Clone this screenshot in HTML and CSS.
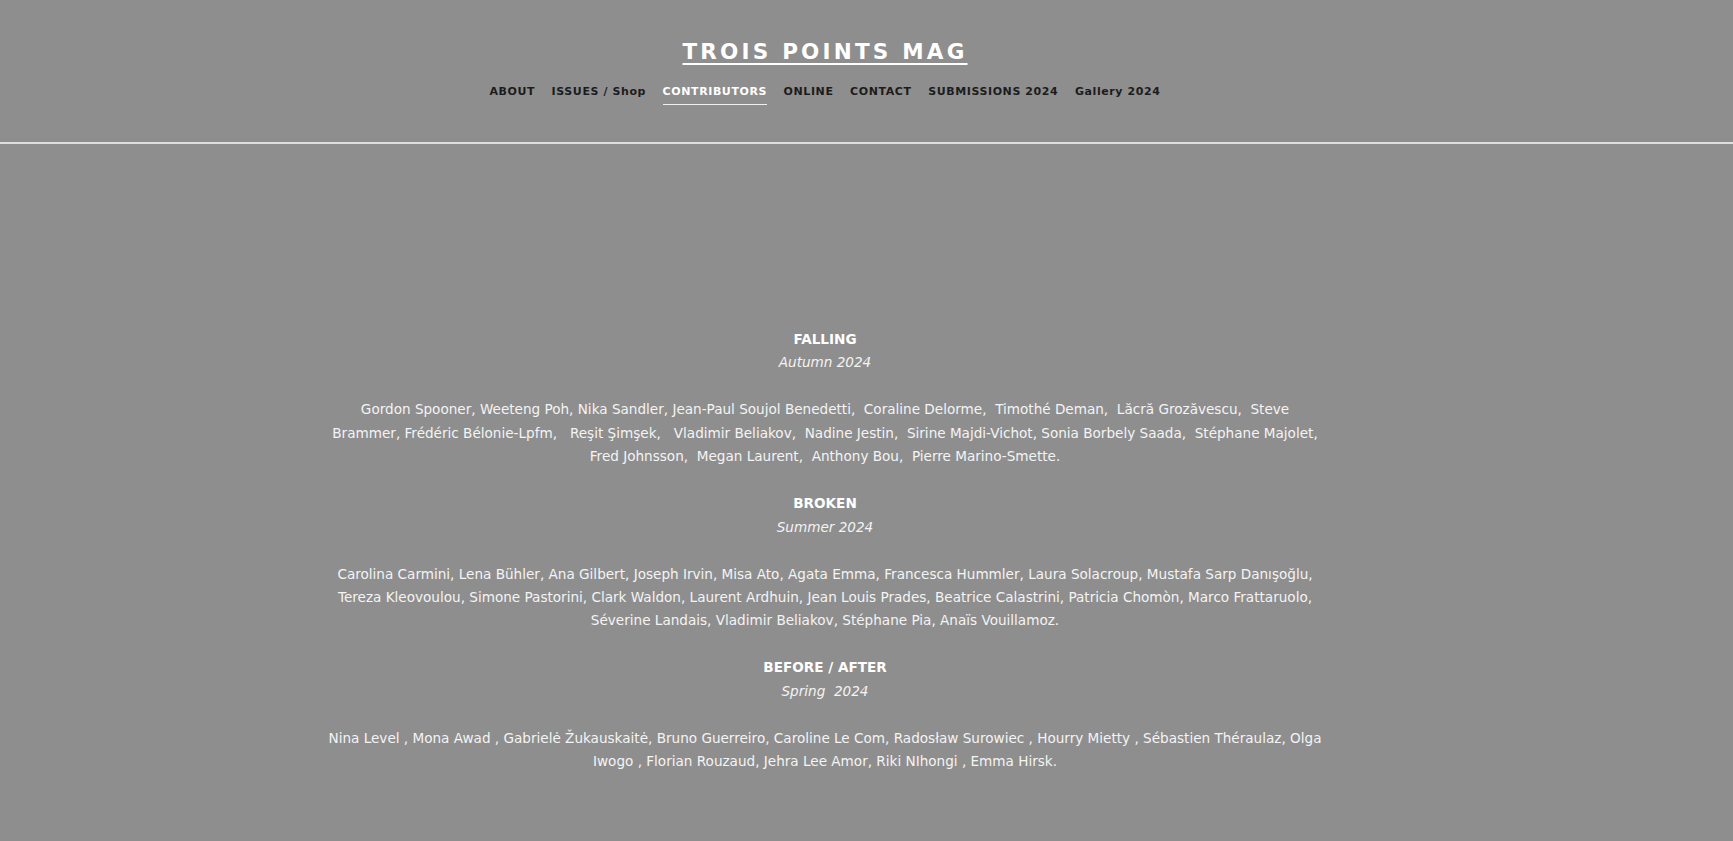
FILE: index.html
```html
<!DOCTYPE html>
<html lang="fr">
<head>
<meta charset="utf-8">
<title>Contributors — Trois Points Mag</title>
<link rel="stylesheet" href="styles.css">
</head>
<body>
<header class="site-header">
  <div class="header-inner">
    <a class="brand" href="#">TROIS POINTS MAG</a>
    <nav class="main-nav">
      <a class="nav-link" href="#">ABOUT</a>
      <a class="nav-link" href="#">ISSUES / Shop</a>
      <a class="nav-link active" href="#">CONTRIBUTORS</a>
      <a class="nav-link" href="#">ONLINE</a>
      <a class="nav-link" href="#">CONTACT</a>
      <a class="nav-link" href="#">SUBMISSIONS 2024</a>
      <a class="nav-link" href="#">Gallery 2024</a>
    </nav>
  </div>
</header>
<main class="content">
  <div class="text-block">
    <p class="issue-title">FALLING</p>
    <p class="issue-season">Autumn 2024</p>
    <p class="spacer">&nbsp;</p>
    <p class="names">Gordon Spooner, Weeteng Poh, Nika Sandler, Jean-Paul Soujol Benedetti,&nbsp; Coraline Delorme,&nbsp; Timothé Deman,&nbsp; Lăcră Grozăvescu,&nbsp; Steve Brammer, Frédéric Bélonie-Lpfm,&nbsp;&nbsp; Reşit Şimşek,&nbsp;&nbsp; Vladimir Beliakov,&nbsp; Nadine Jestin,&nbsp; Sirine Majdi-Vichot, Sonia Borbely Saada,&nbsp; Stéphane Majolet, Fred Johnsson,&nbsp; Megan Laurent,&nbsp; Anthony Bou,&nbsp; Pierre Marino-Smette.</p>
    <p class="spacer">&nbsp;</p>
    <p class="issue-title">BROKEN</p>
    <p class="issue-season">Summer 2024</p>
    <p class="spacer">&nbsp;</p>
    <p class="names">Carolina Carmini, Lena Bühler, Ana Gilbert, Joseph Irvin, Misa Ato, Agata Emma, Francesca Hummler, Laura Solacroup, Mustafa Sarp Danışoğlu, Tereza Kleovoulou, Simone Pastorini, Clark Waldon, Laurent Ardhuin, Jean Louis Prades, Beatrice Calastrini, Patricia Chomòn, Marco Frattaruolo, Séverine Landais, Vladimir Beliakov, Stéphane Pia, Anaïs Vouillamoz.</p>
    <p class="spacer">&nbsp;</p>
    <p class="issue-title">BEFORE / AFTER</p>
    <p class="issue-season">Spring&nbsp; 2024</p>
    <p class="spacer">&nbsp;</p>
    <p class="names">Nina Level , Mona Awad , Gabrielė Žukauskaitė, Bruno Guerreiro, Caroline Le Com, Radosław Surowiec , Hourry Mietty , Sébastien Théraulaz, Olga Iwogo , Florian Rouzaud, Jehra Lee Amor, Riki NIhongi , Emma Hirsk.</p>
  </div>
</main>
</body>
</html>
```
FILE: styles.css
```css
html, body {
  margin: 0;
  padding: 0;
}
body {
  background: #8e8e8e;
  font-family: "DejaVu Sans", "Liberation Sans", sans-serif;
  color: #f4f4f4;
}
.site-header {
  border-bottom: 2px solid #dedede;
}
.header-inner {
  width: 1650px;
  display: flex;
  flex-direction: column;
  align-items: center;
  padding: 37px 0 37px;
}
.brand {
  font-size: 21.5px;
  line-height: 30px;
  font-weight: 700;
  letter-spacing: 3.2px;
  color: #ffffff;
  text-decoration: underline;
  text-decoration-thickness: 2px;
  text-underline-offset: 4px;
}
.main-nav {
  display: flex;
  gap: 16.5px;
  margin-top: 15px;
}
.nav-link {
  font-size: 11px;
  line-height: 20px;
  font-weight: 700;
  letter-spacing: 0.6px;
  color: #1c1c1c;
  text-decoration: none;
  padding-bottom: 2px;
  border-bottom: 1px solid transparent;
}
.nav-link.active {
  color: #ffffff;
  border-bottom-color: #f0f0f0;
}
.content {
  width: 1650px;
  display: flex;
  justify-content: center;
  padding-top: 184px;
  padding-bottom: 60px;
}
.text-block {
  width: 995.5px;
  text-align: center;
  font-size: 13.58px;
  line-height: 23.45px;
}
.text-block p {
  margin: 0;
}
.issue-title {
  font-weight: 700;
  color: #ffffff;
}
.issue-season {
  font-style: italic;
}
```
